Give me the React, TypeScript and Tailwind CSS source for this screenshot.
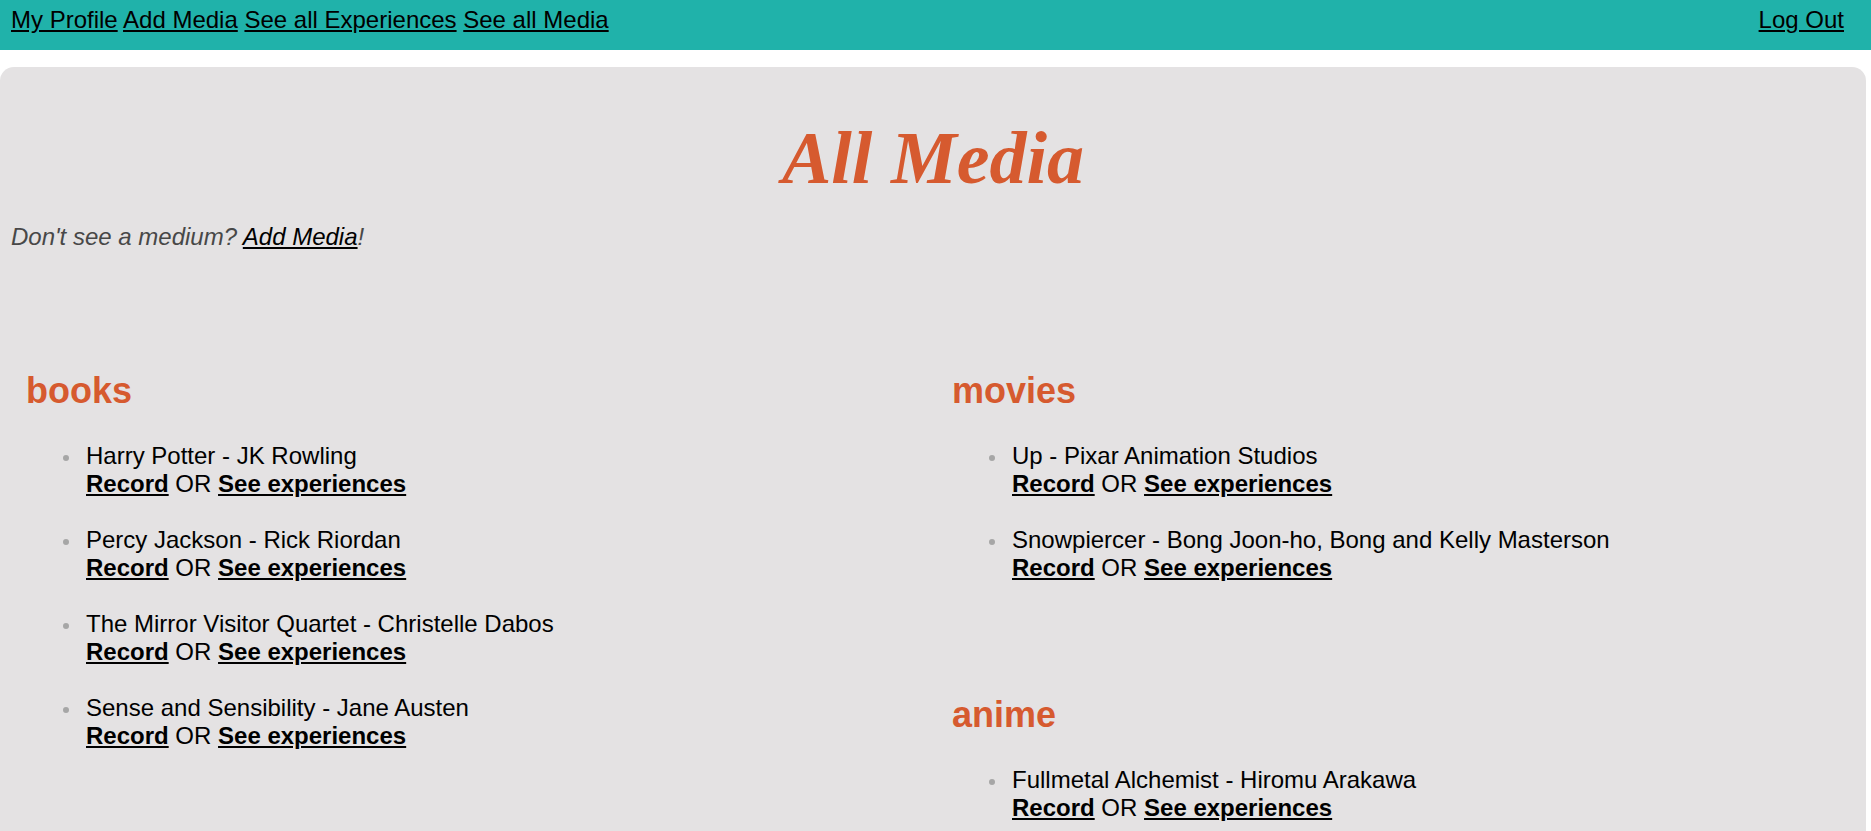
import React from 'react';

const sections = [
  {
    heading: 'books',
    items: [
      'Harry Potter - JK Rowling',
      'Percy Jackson - Rick Riordan',
      'The Mirror Visitor Quartet - Christelle Dabos',
      'Sense and Sensibility - Jane Austen',
    ],
  },
  {
    heading: 'movies',
    items: [
      'Up - Pixar Animation Studios',
      'Snowpiercer - Bong Joon-ho, Bong and Kelly Masterson',
    ],
  },
  {
    heading: 'anime',
    items: ['Fullmetal Alchemist - Hiromu Arakawa'],
  },
];

function MediaSection({ heading, items }: { heading: string; items: string[] }) {
  return (
    <div className="flex flex-col">
      <h2 className="pl-[19px] text-[36px] leading-[41px] font-bold text-[#d65a2f]">{heading}</h2>
      <ul className="mt-[31px] flex flex-col">
        {items.map((item) => (
          <li key={item} className="flex items-start mb-[28px] text-[24px] leading-[28px] text-black">
            <span className="shrink-0 w-[6px] h-[6px] rounded-full bg-[#a6a6a6] ml-[56px] mt-[13px]" />
            <div className="ml-[17px]">
              <div>{item}</div>
              <div>
                <a href="#" className="font-bold underline">Record</a> OR{' '}
                <a href="#" className="font-bold underline">See experiences</a>
              </div>
            </div>
          </li>
        ))}
      </ul>
    </div>
  );
}

export default function App() {
  return (
    <div className="min-h-screen bg-white font-['Liberation_Sans',Arial,sans-serif] text-black">
      <nav className="h-[50px] bg-[#20b2aa] flex justify-between items-start pt-[6px] pl-[11px] pr-[27px] text-[24px] leading-[28px]">
        <div>
          <a href="#" className="underline">My Profile</a>{' '}
          <a href="#" className="underline">Add Media</a>{' '}
          <a href="#" className="underline">See all Experiences</a>{' '}
          <a href="#" className="underline">See all Media</a>
        </div>
        <a href="#" className="underline">Log Out</a>
      </nav>

      <main className="mt-[17px] mr-[5px] rounded-t-[14px] bg-[#e4e2e3] pt-[49px] pb-[40px] min-h-[780px]">
        <h1 className="text-center font-['Liberation_Serif','Times_New_Roman',serif] italic font-bold text-[74px] leading-[84px] text-[#d65a2f]">
          All Media
        </h1>
        <p className="mt-[23px] pl-[11px] italic text-[24px] leading-[28px] text-[#484848]">
          Don't see a medium? <a href="#" className="underline text-black">Add Media</a>!
        </p>

        <div className="mt-[119px] px-[7px] grid grid-cols-2">
          <div className="flex flex-col">
            <MediaSection {...sections[0]} />
          </div>
          <div className="flex flex-col gap-[84px]">
            <MediaSection {...sections[1]} />
            <MediaSection {...sections[2]} />
          </div>
        </div>
      </main>
    </div>
  );
}
